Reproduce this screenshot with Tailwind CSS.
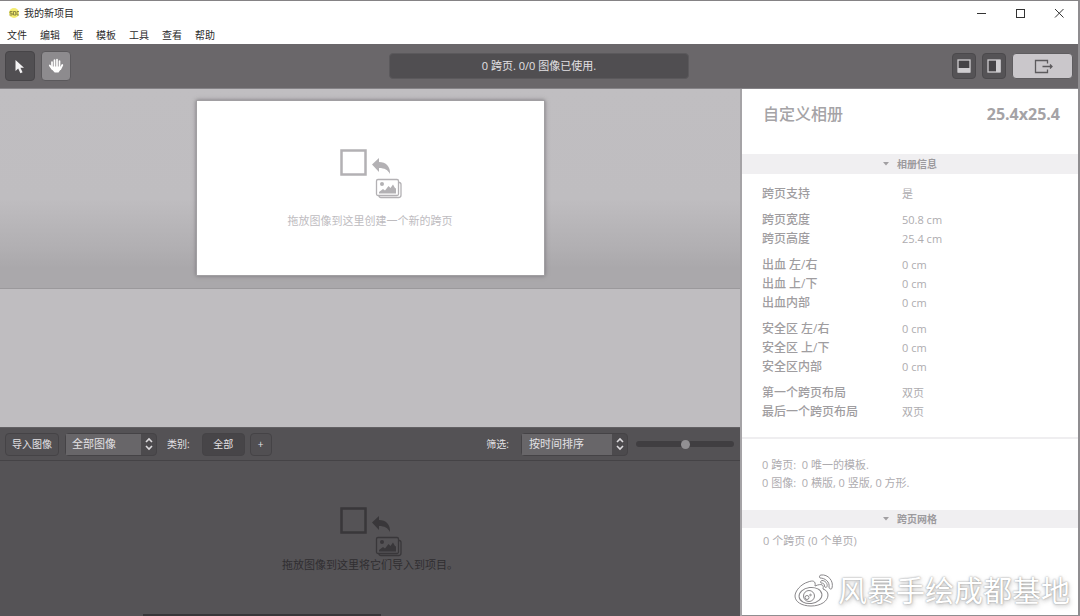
<!DOCTYPE html>
<html lang="zh-CN">
<head>
<meta charset="utf-8">
<title>我的新项目</title>
<script src="https://cdn.jsdelivr.net/npm/@tailwindcss/browser@4"></script>
</head>
<body class="flex h-screen flex-col overflow-hidden border-t border-r-2 border-t-[#858385] border-r-[#8f8d90] bg-white font-['Open_Sans','Noto_Sans_CJK_SC',sans-serif] text-[10px] text-[#2b2a2b]">

<svg class="hidden" aria-hidden="true">
  <symbol id="drop" viewBox="0 0 63 50">
    <rect x="2.500" y="1.500" width="24" height="24" fill="none" stroke="currentColor" stroke-width="2.500"/>
    <path d="M33 15.500 40 9v4c7 0 11.500 4.500 11 12-2-4-5.500-6-11-6v4z" fill="currentColor"/>
    <path d="M60 33.500c1.300 0 2 .8 2 2V46c0 1.500-.8 2.500-2.300 2.500H42c-1.200 0-2-.7-2-2" fill="none" stroke="currentColor" stroke-width="1.300"/>
    <rect x="37.500" y="30.500" width="22" height="16" rx="1.500" fill="none" stroke="currentColor" stroke-width="1.300"/>
    <circle cx="43" cy="35" r="2" fill="currentColor"/>
    <path d="M40 44.500V43l4-3 2 1.500 3.500-4.500 2 2 2.500-3.500 2 3.500 1 .5v5z" fill="currentColor"/>
  </symbol>
</svg>

<header>
  <div class="flex h-6 items-center gap-1 pl-2">
    <svg class="size-3" viewBox="0 0 12 12" aria-hidden="true"><circle cx="6" cy="6" r="5" fill="#f3ec70"/><path d="M4.500 4.500H2v1.700h2.200V8H1.500M5.500 4.500h2L8 8H5.500zM11 4.500H9V8h2" fill="none" stroke="#77743a" stroke-width=".8"/></svg>
    <h1 class="grow leading-4">我的新项目</h1>
    <div class="flex gap-[17px] pr-2">
      <button aria-label="最小化"><svg class="size-[22px]" viewBox="0 0 22 22"><path d="M7 11.500h9" stroke="#333" fill="none"/></svg></button>
      <button aria-label="最大化"><svg class="size-[22px]" viewBox="0 0 22 22"><rect x="7.500" y="7.500" width="8" height="8" stroke="#333" fill="none"/></svg></button>
      <button aria-label="关闭"><svg class="size-[22px]" viewBox="0 0 22 22"><path d="m7 7 8.500 8.500M15.500 7 7 15.500" stroke="#333" fill="none"/></svg></button>
    </div>
  </div>
  <nav class="flex h-[19px] items-center gap-[13px] pl-[7px] leading-4">
    <button>文件</button><button>编辑</button><button>框</button><button>模板</button><button>工具</button><button>查看</button><button>帮助</button>
  </nav>
</header>

<div class="flex h-[45px] shrink-0 items-center justify-between border-b border-[#858387] bg-[#6a676a] pr-[5px] pl-[5px]">
  <div class="flex flex-1 gap-[6px]">
    <button aria-label="选择" class="flex size-[30px] items-center justify-center rounded-sm border border-[#474548] bg-[#514f52]"><svg class="h-[15px] w-3" viewBox="0 0 12 15"><path d="M1.500 1v11l2.700-2.500 2.200 4.700 2.200-1-2.200-4.500H10z" fill="#f4f3f4"/></svg></button>
    <button aria-label="移动" class="flex size-[30px] items-center justify-center rounded-sm border border-[#5b595c] bg-[#8d8b8e]"><svg class="size-4" viewBox="0 0 16 16" fill="none" stroke="#fff" stroke-linecap="round"><path d="M4 4v6M6.500 2v7M9 1.500V9M11.500 3v7" stroke-width="1.700"/><path d="m1.800 7.500 2.500 3.500M14.300 7l-2 4" stroke-width="1.800"/><path d="M3.500 8.500h9l.5 2.500-2.500 3.500H6.700L3.500 11z" fill="#fff" stroke="none"/></svg></button>
  </div>
  <p class="flex h-[26px] w-[300px] items-center justify-center rounded-sm border border-[#5b595c] bg-[#504e51] text-[11px] text-[#e2e0e3]">0 跨页. 0/0 图像已使用.</p>
  <div class="flex flex-1 items-center justify-end gap-[6px]">
    <button aria-label="底部面板" class="flex h-[26px] w-6 items-center justify-center rounded-sm border border-[#4b494c] bg-[#555356]"><svg class="size-[14px] shrink-0" viewBox="0 0 14 14"><rect x="1" y="1" width="12" height="12" fill="#454346" stroke="#cfcdd0" stroke-width="1.300"/><path d="M1 9h12v4.500H1z" fill="#cfcdd0"/></svg></button>
    <button aria-label="侧边面板" class="flex h-[26px] w-6 items-center justify-center rounded-sm border border-[#4b494c] bg-[#555356]"><svg class="size-[14px] shrink-0" viewBox="0 0 14 14"><rect x="1" y="1" width="12" height="12" fill="#454346" stroke="#cfcdd0" stroke-width="1.300"/><path d="M9 1h4.500v12H9z" fill="#cfcdd0"/></svg></button>
    <button aria-label="导出" class="flex h-[26px] w-[61px] items-center justify-center rounded-sm border border-[#5f5d60] bg-[#cac7cb]"><svg class="h-[15px] w-5" viewBox="0 0 20 15" fill="none" stroke="#5c5a5d" stroke-width="1.300"><path d="M14.500 4.500v-3h-12v12h12v-3M9.500 7.500H19M17 5.500l2 2-2 2"/></svg></button>
  </div>
</div>

<div class="flex min-h-0 grow">
  <main class="flex min-w-0 grow flex-col border-r-2 border-[#a5a3a6]">
    <section class="flex h-[200px] shrink-0 justify-center border-b border-[#9b999c] bg-[linear-gradient(#c0bec1_0%,#bfbdc0_55%,#b1afb2_80%,#aaa8ab_90%,#aaa8ab_100%)] pt-[11px]">
      <div class="flex h-[176px] w-[349px] flex-col items-center border border-[#a19fa2] bg-white pt-12 shadow-[0_0_4px_#79777a]">
        <svg class="h-[50px] w-[63px] text-[#b3b1b4]" aria-hidden="true"><use href="#drop"/></svg>
        <p class="mt-3 text-[11px] leading-5 text-[#bebcbf]">拖放图像到这里创建一个新的跨页</p>
      </div>
    </section>
    <section class="min-h-0 grow bg-[#bfbdc0]"></section>
    <div class="flex h-[34px] shrink-0 items-center justify-between border-t border-b border-t-[#626063] border-b-[#454346] bg-[#545255] pr-[6px] pl-[5px] text-[#e3e1e4]">
      <div class="flex items-center">
        <button class="h-[23px] w-[54px] rounded-sm border border-[#454346] bg-[#514f52]">导入图像</button>
        <div class="ml-[6px] flex h-[23px] w-[92px] items-center rounded-sm border border-[#454346] bg-[#4c4a4d]">
          <select aria-label="图像" class="h-full w-[75px] appearance-none bg-[#686669] pl-[6px] text-[11px]"><option>全部图像</option></select>
          <svg class="ml-[3px] h-[14px] w-[10px]" viewBox="0 0 10 14" aria-hidden="true"><path d="m2 5 3-3 3 3M2 9l3 3 3-3" fill="none" stroke="#dcdadd" stroke-width="1.600"/></svg>
        </div>
        <span class="ml-[10px]">类别:</span>
        <button class="ml-3 h-[23px] w-[43px] rounded-sm border border-[#454346] bg-[#474548]">全部</button>
        <button aria-label="添加" class="ml-[5px] h-[23px] w-[22px] rounded-sm border border-[#454346] bg-[#514f52]">+</button>
      </div>
      <div class="flex items-center">
        <label for="sort">筛选:</label>
        <div class="ml-3 flex h-[23px] w-[107px] items-center rounded-sm border border-[#454346] bg-[#4c4a4d]">
          <select id="sort" class="h-full w-[90px] appearance-none bg-[#686669] pl-[7px] text-[11px]"><option>按时间排序</option></select>
          <svg class="ml-[3px] h-[14px] w-[10px]" viewBox="0 0 10 14" aria-hidden="true"><path d="m2 5 3-3 3 3M2 9l3 3 3-3" fill="none" stroke="#dcdadd" stroke-width="1.600"/></svg>
        </div>
        <input type="range" aria-label="缩略图大小" value="50" class="ml-2 h-[6px] w-[98px] appearance-none rounded-full bg-[#403e41] [&::-webkit-slider-thumb]:size-[9px] [&::-webkit-slider-thumb]:appearance-none [&::-webkit-slider-thumb]:rounded-full [&::-webkit-slider-thumb]:bg-[#929093]">
      </div>
    </div>
    <section class="flex h-[155px] shrink-0 flex-col items-center bg-[#555356] pt-[46px]">
      <svg class="h-[50px] w-[63px] text-[#39373a]" aria-hidden="true"><use href="#drop"/></svg>
      <p class="text-[11px] leading-4 text-[#302e31]">拖放图像到这里将它们导入到项目。</p>
      <div class="mt-auto flex w-full justify-center pr-[216px]"><div class="h-[2px] w-[238px] bg-[#383639]"></div></div>
    </section>
  </main>

  <aside class="relative flex w-[336px] shrink-0 flex-col border-b border-b-[#8f8d90] text-[11px] text-[#aeacaf]">
    <div class="flex h-[65px] items-start justify-between pt-[13px] pr-[18px] pl-[21px] text-base leading-6 text-[#a5a3a6]">
      <h2 class="font-medium">自定义相册</h2><span class="font-bold">25.4x25.4</span>
    </div>
    <button class="flex h-5 w-full items-center justify-center gap-2 bg-[#f0eff1] text-[10px] font-bold text-[#9c9a9d]"><svg class="h-1 w-[6px]" viewBox="0 0 6 4" aria-hidden="true"><path d="M0 0h6L3 3.500z" fill="#a19fa2"/></svg>相册信息</button>
    <table class="mt-[10px] ml-5 w-[240px] border-collapse text-left leading-[19px] [&_th]:w-[140px] [&_th]:p-0 [&_th]:text-xs [&_th]:leading-[19px] [&_th]:font-medium [&_th]:text-[#9f9da0] [&_td]:p-0">
      <tbody>
        <tr><th scope="row">跨页支持</th><td>是</td></tr>
        <tr class="h-[7px]"></tr>
        <tr><th scope="row">跨页宽度</th><td>50.8 cm</td></tr>
        <tr><th scope="row">跨页高度</th><td>25.4 cm</td></tr>
        <tr class="h-[7px]"></tr>
        <tr><th scope="row">出血 左/右</th><td>0 cm</td></tr>
        <tr><th scope="row">出血 上/下</th><td>0 cm</td></tr>
        <tr><th scope="row">出血内部</th><td>0 cm</td></tr>
        <tr class="h-[7px]"></tr>
        <tr><th scope="row">安全区 左/右</th><td>0 cm</td></tr>
        <tr><th scope="row">安全区 上/下</th><td>0 cm</td></tr>
        <tr><th scope="row">安全区内部</th><td>0 cm</td></tr>
        <tr class="h-[7px]"></tr>
        <tr><th scope="row">第一个跨页布局</th><td>双页</td></tr>
        <tr><th scope="row">最后一个跨页布局</th><td>双页</td></tr>
      </tbody>
    </table>
    <div class="mt-4 border-t-2 border-[#efeef0] pt-[17px] pb-[18px] pl-5 leading-[18px]">
      <p>0 跨页:&nbsp; 0 唯一的模板.</p>
      <p>0 图像:&nbsp; 0 横版, 0 竖版, 0 方形.</p>
    </div>
    <button class="flex h-[18px] w-full shrink-0 items-center justify-center gap-2 bg-[#f0eff1] text-[10px] font-bold text-[#9c9a9d]"><svg class="h-1 w-[6px]" viewBox="0 0 6 4" aria-hidden="true"><path d="M0 0h6L3 3.500z" fill="#a19fa2"/></svg>跨页网格</button>
    <p class="mt-1 pl-[21px] leading-[18px]">0 个跨页 (0 个单页)</p>
    <div class="absolute right-2 bottom-1 flex items-center gap-1 text-[29px] leading-10 whitespace-nowrap text-white">
      <svg class="h-[34px] w-10" viewBox="0 0 40 34" fill="none" stroke="#8a888b" stroke-width="1" aria-hidden="true">
        <path d="M14 8C7 10 1 17 1 22c0 6 7 10 16 10 10 0 17-5 17-11 0-3-2-5-5-6 1-4-1-6-8-3 1-5-2-6-7-4z"/>
        <ellipse cx="16.500" cy="21.500" rx="11.500" ry="8" transform="rotate(-7 16.500 21.500)"/>
        <circle cx="15" cy="22" r="5.500"/><circle cx="13" cy="23.500" r="2"/><circle cx="16.500" cy="21" r=".8"/>
        <path d="M26 4c-1-1-.5-3 1-3 7-1 13 6 11 13-.5 2-3 1-3-1 1-5-4-9-9-9zM27 9c-1-1 0-2.500 1-2.500 3 0 6 3 5 6-.5 1.500-2.500 1-2.500-.5 0-2-1-3-3.500-3z"/>
      </svg>
      <span class="[text-shadow:0_0_2px_#888,1px_2px_4px_#8888]">风暴手绘成都基地</span>
    </div>
  </aside>
</div>
</body>
</html>
